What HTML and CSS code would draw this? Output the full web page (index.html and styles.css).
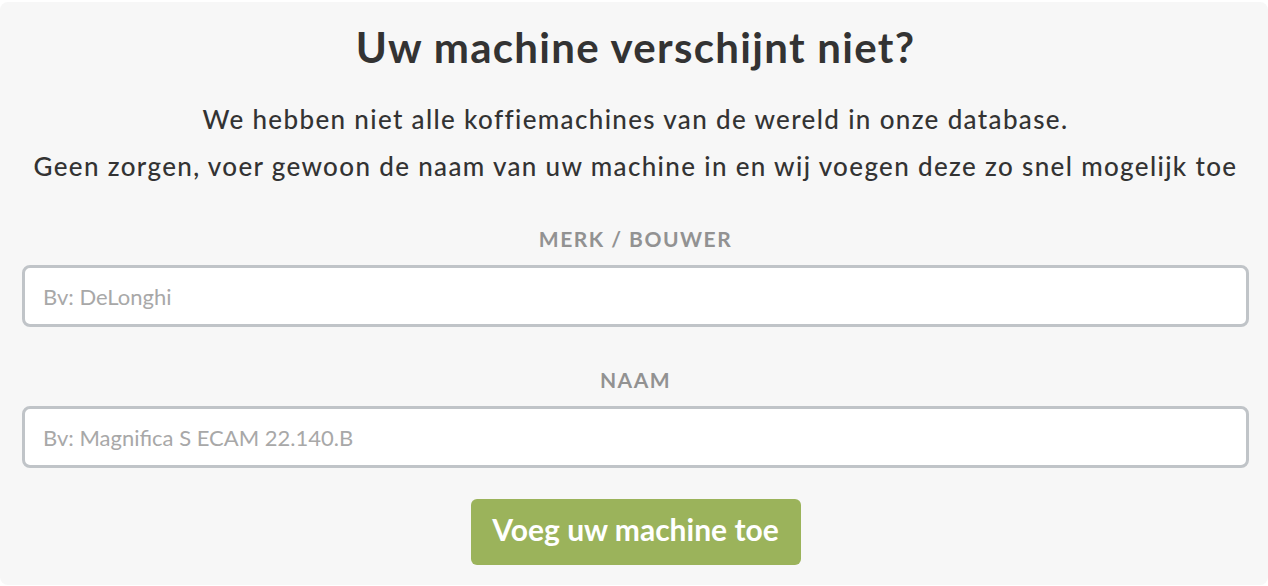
FILE: index.html
```html
<!DOCTYPE html>
<html lang="nl">
<head>
<meta charset="utf-8">
<title>Uw machine verschijnt niet?</title>
<link rel="stylesheet" href="styles.css">
</head>
<body>
<section class="card">
  <h1 class="title">Uw machine verschijnt niet?</h1>
  <p class="intro">We hebben niet alle koffiemachines van de wereld in onze database.</p>
  <p class="intro intro-second">Geen zorgen, voer gewoon de naam van uw machine in en wij voegen deze zo snel mogelijk toe</p>
  <form class="form">
    <label class="field">
      <span class="field-label">Merk / Bouwer</span>
      <input class="field-input" type="text" placeholder="Bv: DeLonghi">
    </label>
    <label class="field">
      <span class="field-label">Naam</span>
      <input class="field-input" type="text" placeholder="Bv: Magnifica S ECAM 22.140.B">
    </label>
    <div class="actions">
      <button class="submit" type="button">Voeg uw machine toe</button>
    </div>
  </form>
</section>
</body>
</html>
```

FILE: styles.css
```css
html, body {
  margin: 0;
  padding: 0;
  background: #ffffff;
}

body {
  padding-top: 2px;
  font-family: Lato, "Open Sans", sans-serif;
  color: #333333;
}

.card {
  background: #f7f7f7;
  border-radius: 8px;
  padding: 19px 19px 20px 22px;
  min-height: 583px;
  box-sizing: border-box;
  text-align: center;
}

.title {
  margin: 0;
  font-size: 42px;
  line-height: 52px;
  font-weight: 700;
  letter-spacing: 1.3px;
  color: #333333;
}

.intro {
  margin: 30px 0 0;
  font-size: 26px;
  line-height: 32px;
  font-weight: 500;
  letter-spacing: 1.35px;
  color: #333333;
}

.intro-second {
  margin-top: 15px;
}

.form {
  display: flex;
  flex-direction: column;
  margin-top: 45px;
}

.field {
  display: flex;
  flex-direction: column;
  align-items: stretch;
  margin-bottom: 41px;
}

.field-label {
  font-size: 21px;
  line-height: 24px;
  font-weight: 700;
  letter-spacing: 1.5px;
  text-transform: uppercase;
  color: #929292;
  margin-bottom: 14px;
}

.field-input {
  height: 62px;
  box-sizing: border-box;
  border: 3px solid #c0c4c8;
  border-radius: 8px;
  background: #ffffff;
  padding: 0 18px;
  font-family: Lato, sans-serif;
  font-size: 22px;
  color: #333333;
  outline: none;
}

.field-input::placeholder {
  color: #a8a8a8;
}

.actions {
  display: flex;
  justify-content: center;
  margin-top: -10px;
}

.submit {
  width: 330px;
  height: 66px;
  padding: 0 0 6px;
  border: 0;
  border-radius: 6px;
  background: #9bb35b;
  color: #ffffff;
  font-family: Lato, sans-serif;
  font-size: 30px;
  font-weight: 700;
  cursor: pointer;
}
```
